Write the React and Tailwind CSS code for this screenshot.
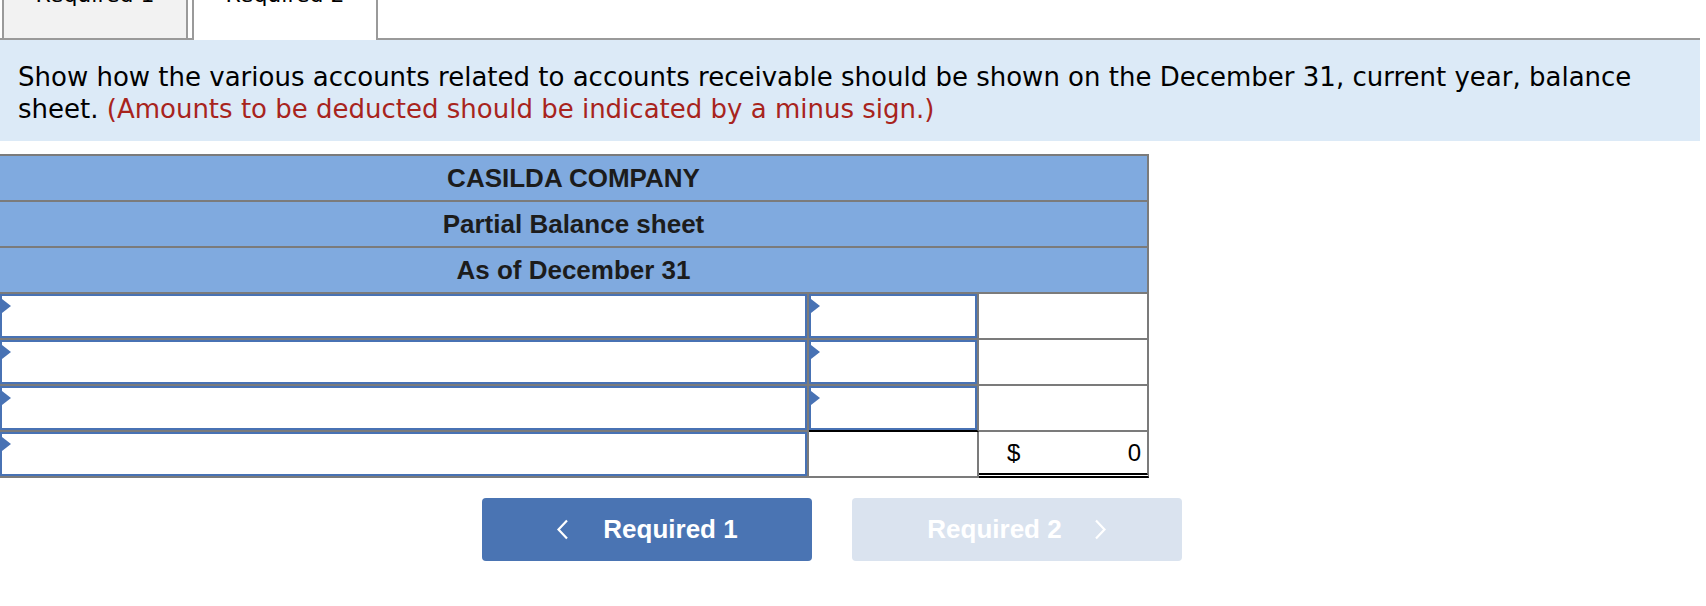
import React from "react";

const rows = [
  { col2: "input" },
  { col2: "input" },
  { col2: "input", totalLine: true },
  { col2: "blank", total: true },
];

function Marker() {
  return <span className="absolute left-0 top-[3px] h-0 w-0 border-y-[7px] border-l-[9px] border-y-transparent border-l-[#4872b4]" />;
}

function InputBox({ marker }) {
  return (
    <div className="relative h-full w-full border-2 border-[#4872b4] bg-white">
      {marker ? <Marker /> : null}
    </div>
  );
}

function Chevron({ flip }) {
  return (
    <svg width="13" height="21" viewBox="0 0 13 21" className={flip ? "rotate-180" : ""}>
      <polyline points="11,1.5 2.5,10.5 11,19.5" fill="none" stroke="white" strokeWidth="2.2" />
    </svg>
  );
}

export default function App() {
  return (
    <div className="h-[606px] w-[1706px] overflow-hidden bg-white font-['DejaVu_Sans',Verdana,sans-serif] text-black">
      <div className="w-[1700px]">
        {/* tabs */}
        <div className="flex h-[40px]">
          <div className="w-[2px] border-b-2 border-[#9a9a9a]" />
          <div className="flex w-[186px] justify-center overflow-hidden border-x-2 border-b-2 border-[#9a9a9a] bg-[#f2f2f2]">
            <span className="-mt-[16px] text-[22px] leading-[22px]">Required 1</span>
          </div>
          <div className="w-[4px] border-b-2 border-[#9a9a9a]" />
          <div className="flex w-[186px] justify-center overflow-hidden border-x-2 border-[#9a9a9a] bg-white">
            <span className="-mt-[16px] text-[22px] leading-[22px]">Required 2</span>
          </div>
          <div className="flex-1 border-b-2 border-[#9a9a9a]" />
        </div>

        {/* instructions */}
        <div className="h-[101px] bg-[#dceaf7] px-[18px] pt-[22px] text-[26px] leading-[31.5px]">
          Show how the various accounts related to accounts receivable should be shown on the December 31, current year, balance sheet.{" "}
          <span className="text-[#a8241d]">(Amounts to be deducted should be indicated by a minus sign.)</span>
        </div>

        {/* table */}
        <div className="mt-[13px] w-[1149px] border-t-2 border-[#7b7b7b] font-['Liberation_Sans',Arial,sans-serif]">
          {["CASILDA COMPANY", "Partial Balance sheet", "As of December 31"].map((title) => (
            <div key={title} className="flex h-[46px] items-center justify-center border-r-2 border-b-2 border-[#7b7b7b] bg-[#80aadf] text-[26px] font-bold text-[#1c1c1c]">
              {title}
            </div>
          ))}
          {rows.map((row, i) => (
            <div key={i} className="grid h-[46px] grid-cols-[809px_170px_170px]">
              <div className="border-r-2 border-b-2 border-[#7b7b7b]">
                <InputBox marker />
              </div>
              <div className={`border-r-2 border-b-2 ${row.totalLine ? "border-r-[#7b7b7b] border-b-black" : "border-[#7b7b7b]"}`}>
                {row.col2 === "input" ? <InputBox marker /> : null}
              </div>
              {row.total ? (
                <div className="flex items-center justify-between border-r-2 border-r-[#7b7b7b] border-b-[5px] border-double border-b-black pl-[28px] pr-[6px] text-[24px]">
                  <span>$</span>
                  <span>0</span>
                </div>
              ) : (
                <div className="border-r-2 border-b-2 border-[#7b7b7b]" />
              )}
            </div>
          ))}
        </div>

        {/* navigation */}
        <div className="mt-[20px] ml-[482px] flex gap-[40px] font-['Liberation_Sans',Arial,sans-serif] text-[26px] font-bold text-white">
          <button type="button" className="flex h-[63px] w-[330px] items-center justify-center gap-[34px] rounded-[4px] bg-[#4a74b3]">
            <Chevron />
            <span>Required 1</span>
          </button>
          <button type="button" className="flex h-[63px] w-[330px] items-center justify-center gap-[32px] rounded-[4px] bg-[#dae3ef]">
            <span>Required 2</span>
            <Chevron flip />
          </button>
        </div>
      </div>
    </div>
  );
}
